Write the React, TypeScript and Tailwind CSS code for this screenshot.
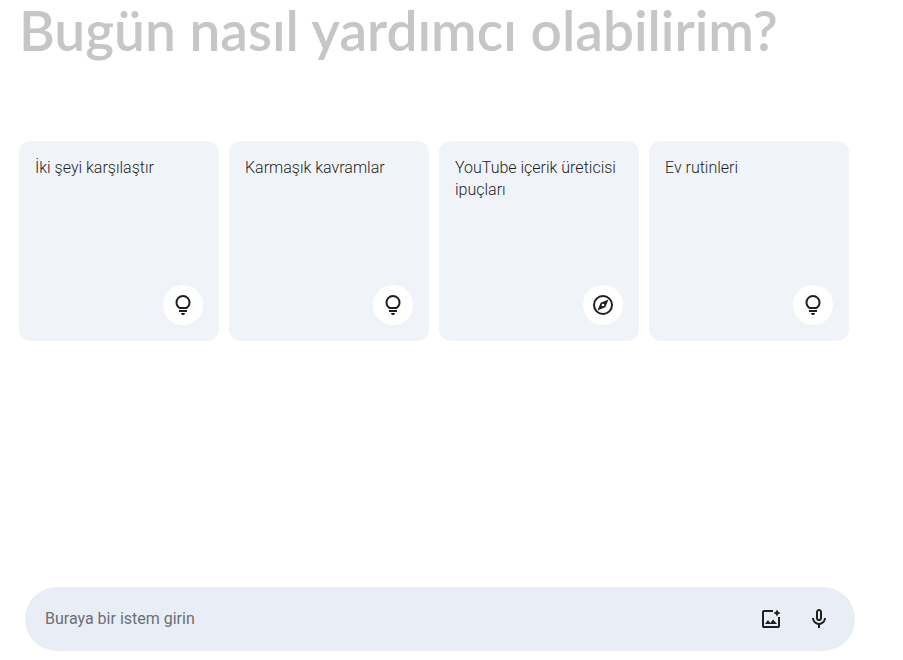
import { useState } from "react";

const bulbPath =
  "M12 22q-.825 0-1.413-.587T10 20h4q0 .825-.587 1.413T12 22Zm-4-3v-2h8v2H8Zm.25-3q-1.725-1.025-2.738-2.75T4.5 9.5q0-3.125 2.188-5.313T12 2q3.125 0 5.313 2.188T19.5 9.5q0 2.025-1.012 3.75T15.75 16h-7.5Zm.6-2h6.3q1.125-.8 1.738-1.975T17.5 9.5q0-2.3-1.6-3.9T12 4q-2.3 0-3.9 1.6T6.5 9.5q0 1.35.613 2.525T8.85 14Z";

const compassPath =
  "M12 2a10 10 0 1 0 0 20 10 10 0 0 0 0-20Zm0 18a8 8 0 1 1 0-16 8 8 0 0 1 0 16Zm-5.5-2.5 7.8-3.2 3.2-7.8-7.8 3.2-3.2 7.8Zm5.5-6.8a1.3 1.3 0 1 1 0 2.6 1.3 1.3 0 0 1 0-2.6Z";

const imagePath =
  "M5 21q-.825 0-1.413-.587T3 19V5q0-.825.587-1.413T5 3h9v2H5v14h14v-9h2v9q0 .825-.587 1.413T19 21H5Zm1-4 3-4 2.25 3L14 12.5 18 17H6ZM18 9.5l-1.2-2.3-2.3-1.2 2.3-1.2L18 2.5l1.2 2.3L21.5 6l-2.3 1.2L18 9.5Z";

const micPath =
  "M12 14q-1.25 0-2.125-.875T9 11V5q0-1.25.875-2.125T12 2t2.125.875T15 5v6q0 1.25-.875 2.125T12 14Zm-1 7v-3.075q-2.6-.35-4.3-2.325T5 11h2q0 2.075 1.463 3.538T12 16t3.538-1.463T17 11h2q0 2.625-1.7 4.6T13 17.925V21h-2Zm1-9q.425 0 .713-.288T13 11V5q0-.425-.288-.712T12 4t-.712.288T11 5v6q0 .425.288.713T12 12Z";

const suggestions = [
  { title: "İki şeyi karşılaştır", icon: bulbPath },
  { title: "Karmaşık kavramlar", icon: bulbPath },
  { title: "YouTube içerik üreticisi ipuçları", icon: compassPath },
  { title: "Ev rutinleri", icon: bulbPath },
];

function Icon({ path }: { path: string }) {
  return (
    <svg viewBox="0 0 24 24" className="size-6 fill-current" aria-hidden="true">
      <path fillRule="evenodd" d={path} />
    </svg>
  );
}

export default function App() {
  const [prompt, setPrompt] = useState("");

  return (
    <div lang="tr" className="min-h-screen flex flex-col bg-white font-['Roboto',sans-serif] text-[#1f1f1f]">
      <main className="pl-[19px] pr-[54px]">
        <h1 className="font-['Lato',sans-serif] text-[55px] leading-[60px] font-semibold text-[#c4c7c5]">
          Bugün nasıl yardımcı olabilirim?
        </h1>
        <div className="mt-[81px] grid grid-cols-4 gap-[10px]">
          {suggestions.map((item) => (
            <button
              key={item.title}
              className="min-h-[200px] p-4 flex flex-col justify-between rounded-xl bg-[#f0f4f9] hover:bg-[#dde3ea] text-left cursor-pointer"
            >
              <span className="text-base leading-[22px] font-light">{item.title}</span>
              <span className="size-10 self-end flex items-center justify-center rounded-full bg-white">
                <Icon path={item.icon} />
              </span>
            </button>
          ))}
        </div>
      </main>

      <form className="mt-auto mb-[9px] ml-[25px] mr-12 h-16 pl-5 pr-6 flex items-center gap-6 rounded-full bg-[#e9eef6]">
        <input
          type="text"
          aria-label="Buraya bir istem girin"
          placeholder="Buraya bir istem girin"
          value={prompt}
          onChange={(e) => setPrompt(e.target.value)}
          className="flex-1 min-w-0 bg-transparent text-base outline-none placeholder:text-[#6b6f76]"
        />
        <button type="button" aria-label="Resim yükle" className="cursor-pointer">
          <Icon path={imagePath} />
        </button>
        <button type="button" aria-label="Mikrofonu kullan" className="cursor-pointer">
          <Icon path={micPath} />
        </button>
      </form>
    </div>
  );
}
